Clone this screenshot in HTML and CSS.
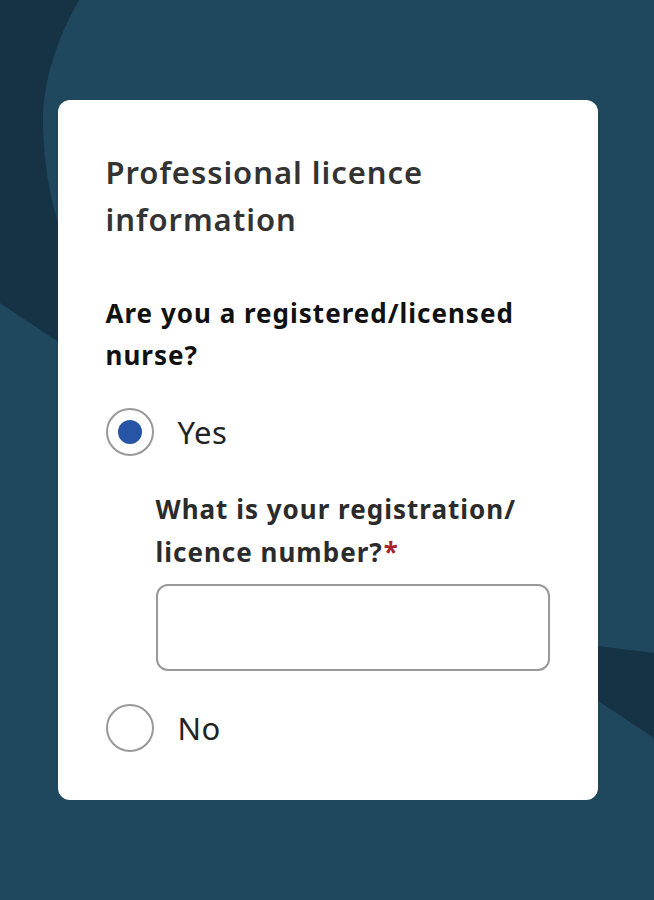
FILE: index.html
```html
<!DOCTYPE html>
<html lang="en">
<head>
<meta charset="utf-8">
<title>Professional licence information</title>
<link rel="stylesheet" href="styles.css">
</head>
<body>
<svg class="bg" width="654" height="900" viewBox="0 0 654 900" aria-hidden="true">
  <path class="bg-dark" d="M0 0 H654 V738 L0 303 Z"/>
  <path class="bg-light" d="M79 0 C56 40 42 85 43 125 C44 165 50 200 60 228 C120 420 350 600 598 646 C620 649 640 651 654 653 V0 Z"/>
</svg>
<main class="page">
  <section class="card">
    <h1 class="title">Professional licence information</h1>
    <fieldset class="group">
      <legend class="question">Are you a registered/licensed nurse?</legend>
      <label class="option">
        <span class="radio checked"><span class="dot"></span></span>
        <span class="option-text">Yes</span>
      </label>
      <div class="nested">
        <label class="field-label" for="licence">What is your registration/ licence number?<span class="req">*</span></label>
        <input class="text-input" id="licence" type="text">
      </div>
      <label class="option">
        <span class="radio"></span>
        <span class="option-text">No</span>
      </label>
    </fieldset>
  </section>
</main>
</body>
</html>
```
FILE: styles.css
```css
html, body {
  margin: 0;
  padding: 0;
}
body {
  background: #1f475d;
  font-family: "Noto Sans", "Open Sans", sans-serif;
  width: 654px;
  height: 900px;
  overflow: hidden;
  position: relative;
}
.bg {
  position: absolute;
  left: 0;
  top: 0;
  z-index: 0;
}
.bg-dark { fill: #153345; }
.bg-light { fill: #1f475d; }
.page {
  position: relative;
  z-index: 1;
  display: flex;
  justify-content: center;
  padding: 100px 0 0 1px;
}
.card {
  box-sizing: border-box;
  width: 540px;
  height: 700px;
  background: #fff;
  border-radius: 12px;
  padding: 49px 48px 48px 48px;
}
.title {
  margin: 0;
  font-size: 31px;
  line-height: 46.5px;
  font-weight: 600;
  letter-spacing: 0.95px;
  color: #333;
  width: 360px;
}
.group {
  border: 0;
  margin: 50px 0 0 0;
  padding: 0;
  min-width: 0;
}
.question {
  padding: 0;
  font-size: 26px;
  line-height: 42px;
  font-weight: 700;
  letter-spacing: 1px;
  color: #111;
  width: 430px;
  float: left;
  margin-bottom: 32px;
}
.option {
  clear: both;
  display: flex;
  align-items: center;
  gap: 24px;
  height: 48px;
}
.radio {
  box-sizing: border-box;
  width: 48px;
  height: 48px;
  border: 2px solid #999;
  border-radius: 50%;
  display: flex;
  align-items: center;
  justify-content: center;
  flex: none;
}
.dot {
  width: 24px;
  height: 24px;
  border-radius: 50%;
  background: #2755a5;
}
.option-text {
  font-size: 31px;
  line-height: 48px;
  letter-spacing: 0.5px;
  color: #222;
}
.nested {
  padding: 32px 0 0 50px;
  margin-bottom: 33px;
}
.field-label {
  display: block;
  font-size: 26px;
  line-height: 43px;
  font-weight: 700;
  letter-spacing: 1px;
  color: #2b2b2b;
  width: 380px;
}
.req {
  color: #a4262c;
  margin-left: 1px;
}
.text-input {
  display: block;
  box-sizing: border-box;
  width: 394px;
  height: 87px;
  margin-top: 10px;
  border: 2px solid #999;
  border-radius: 12px;
  background: #fff;
  font: inherit;
}
```
